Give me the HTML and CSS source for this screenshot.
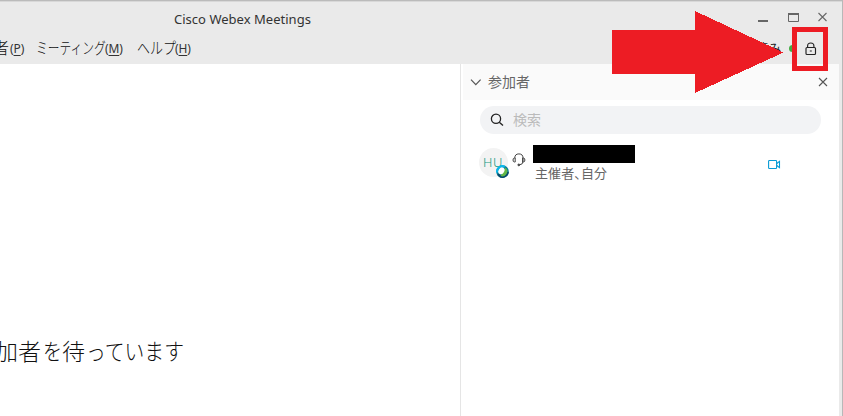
FILE: index.html
```html
<!DOCTYPE html>
<html lang="ja">
<head>
<meta charset="utf-8">
<title>Cisco Webex Meetings</title>
<link rel="stylesheet" href="styles.css">
</head>
<body>
<div class="window">
  <header class="titlebar">
    <h1>Cisco Webex Meetings</h1>
    <svg class="controls" width="74" height="14" viewBox="0 0 74 14" fill="none" stroke="#666">
      <path d="M1 11H11" stroke-width="2"/>
      <path d="M31.5 4V11.5H41.5V4" /><path d="M31 4H42" stroke-width="2"/>
      <path d="M61.5 3L69.5 11M69.5 3L61.5 11" stroke-width="1.1"/>
    </svg>
  </header>
  <nav class="menubar">
    <div class="menu menu-p"><span class="jp">者</span><span class="key">(<u>P</u>)</span></div>
    <div class="menu menu-m"><span class="jp">ミーティング</span><span class="key">(<u>M</u>)</span></div>
    <div class="menu menu-h"><span class="jp">ヘルプ</span><span class="key">(<u>H</u>)</span></div>
    <div class="status"><span>接続済み</span><i class="dot"></i>
      <svg class="lock" width="12" height="14" viewBox="0 0 12 14" fill="none" stroke="#222" stroke-width="1.15"><rect x="1" y="5.5" width="9.5" height="7" rx="1"/><path d="M2.6 5.5V4Q2.6 1 5.75 1T8.9 4V5.5M4.8 9H6.8"/></svg>
    </div>
  </nav>
  <div class="content">
    <main class="stage">
      <p class="waiting"><span class="w-kanji">加者</span><span class="w-wo">を</span><span class="w-wait">待</span><span class="w-kana">っています</span></p>
    </main>
    <aside class="panel">
      <div class="panel-head">
        <svg width="12" height="8" viewBox="0 0 12 8" fill="none" stroke="#555" stroke-width="1.2"><path d="M1 1.7L5.8 6.7L10.6 1.7"/></svg>
        <h2>参加者</h2>
        <svg class="close" width="10" height="10" viewBox="0 0 10 10" fill="none" stroke="#555" stroke-width="1.1"><path d="M1 1L9 9M9 1L1 9"/></svg>
      </div>
      <div class="search">
        <svg width="14" height="14" viewBox="0 0 14 14" fill="none" stroke="#222" stroke-width="1.3"><circle cx="6" cy="5.8" r="4.6"/><path d="M9.3 9.2L13 12.6"/></svg>
        <span>検索</span>
      </div>
      <div class="person">
        <div class="avatar"><span>HU</span>
          <svg class="badge" width="13" height="13" viewBox="0 0 13 13"><circle cx="6.5" cy="6.5" r="6.3" fill="#087d9b"/><path d="M1.3 7.5A5.3 5.3 0 0 1 8.8 1.7" fill="none" stroke="#08b9ed" stroke-width="2.2"/><path d="M2 9.2A5.3 5.3 0 0 0 11.8 7" fill="none" stroke="#06496a" stroke-width="2.2"/><path d="M9.5 2.5A5 5 0 0 1 4.5 11Z" fill="#62b846"/><ellipse cx="5.4" cy="5.8" rx="2.8" ry="3.6" transform="rotate(35 5.4 5.8)" fill="#fff"/></svg>
        </div>
        <svg class="headset" width="14" height="14" viewBox="0 0 14 14" fill="none" stroke="#444" stroke-width="1"><path d="M2.8 5.2V5A4.1 4.1 0 0 1 11 5V8.5Q11 11.5 7.6 11.8"/><path d="M3.2 5H2.5Q1 5 1 7T2.5 9H3.2ZM10.6 5H11.4Q12.9 5 12.9 7T11.4 9H10.6Z"/><circle cx="6.8" cy="11.9" r=".9" fill="#444"/></svg>
        <div class="identity"><div class="redacted"></div><div class="role">主催者、自分</div></div>
        <svg class="camera" width="13" height="11" viewBox="0 0 13 11" fill="none" stroke="#079bd5" stroke-width="1.1"><rect x=".6" y="1.5" width="8" height="8" rx=".8"/><path d="M8.8 4.5L11.5 2.3V8.7L8.8 6.5"/></svg>
      </div>
    </aside>
  </div>
  <svg class="arrow" width="172" height="84" viewBox="0 0 172 84" shape-rendering="crispEdges"><path d="M0 19H83V0L171.5 41.5L83 82V63H0Z" fill="#ed1c24"/></svg>
  <div class="highlight"></div>
</div>
</body>
</html>
```
FILE: styles.css
```css
* { box-sizing: border-box; }
body { margin: 0; overflow: hidden; font-family: "Noto Sans", "Noto Sans CJK JP", sans-serif; color: #333; }
h1, h2, p { margin: 0; font-weight: 400; }
svg { display: block; flex: none; }
.window { position: relative; width: 843px; height: 416px; display: flex; flex-direction: column; background: #eaeaea; border-top: 1px solid #bbb; border-right: 1px solid #b8b8b8; overflow: hidden; white-space: nowrap; }
.window::before { content: ""; flex: none; height: 1px; background: #d8d8d8; }
.titlebar { height: 34px; flex: none; display: flex; align-items: flex-start; padding: 8px 11px 0 174px; }
.titlebar h1 { font-size: 13px; line-height: 19px; letter-spacing: .02px; }
.controls { margin: 0 0 0 auto; }
.menubar { height: 28px; flex: none; display: flex; }
.menu { display: flex; height: 28px; line-height: 24px; flex: none; }
.menu-p { width: 36px; }
.menu-m { width: 101px; }
.menu-h { width: 80px; }
.jp { display: block; font: 300 16px/22px "Noto Sans CJK JP", sans-serif; color: #111; transform-origin: left; }
.menu-p .jp { width: 10px; text-indent: -7px; }
.menu-m .jp { width: 69px; transform: scaleX(.735); }
.menu-h .jp { width: 38px; transform: scaleX(.81); }
.key { font-size: 12px; line-height: 26px; letter-spacing: -.1px; }
.key u { text-underline-offset: 2px; }
.status { display: flex; margin-left: auto; padding-right: 25px; align-items: flex-start; }
.status span { font: 13px/23px "Noto Sans CJK JP", sans-serif; color: #222; }
.dot { width: 7px; height: 7px; margin: 9px 9px 0 8px; border-radius: 50%; background: #43ab43; }
.lock { margin-top: 6px; }
.content { flex: 1; display: flex; min-height: 0; margin-right: 3px; background: #fff; }
.stage { width: 460px; flex: none; overflow: hidden; padding-top: 269px; }
.waiting { display: flex; font: 300 23px/34px "Noto Sans CJK JP", sans-serif; color: #111; }
.waiting span { flex: none; transform-origin: left; }
.w-kanji { width: 43px; text-indent: -5px; }
.w-wo { width: 19px; transform: scaleX(.83); }
.w-wait { width: 24px; }
.w-kana { width: 98px; transform: scaleX(.86); }
.panel { flex: 1; border-left: 1px solid #e5e5e5; padding-left: 2px; }
.panel-head { height: 36px; background: #fafafa; display: flex; align-items: center; padding: 0 11px 0 7px; }
.panel-head h2 { font: 14px/20px "Noto Sans CJK JP", sans-serif; color: #666; margin: -2px 0 0 6px; }
.close { margin-left: auto; }
.search { height: 28px; margin: 6px 18px 0 17px; border-radius: 14px; background: #f2f3f5; display: flex; align-items: center; padding-left: 10px; }
.search span { font: 14px/20px "Noto Sans CJK JP", sans-serif; color: #bbb; margin: -2px 0 0 9px; }
.person { display: flex; height: 50px; padding: 11px 0 0 16px; }
.avatar { position: relative; width: 29px; height: 29px; margin-top: 3px; border-radius: 50%; background: #f3f3f3; }
.avatar span { display: block; padding-left: 4px; font: 300 13px/29px "Noto Sans", sans-serif; letter-spacing: .7px; color: #149a81; }
.badge { position: absolute; left: 17px; top: 17px; }
.headset { margin: 8px 0 0 4px; }
.identity { margin-left: 7px; }
.redacted { width: 102px; height: 18px; background: #000; }
.role { padding-left: 2px; font: 13px/20px "Noto Sans CJK JP", sans-serif; letter-spacing: .1px; font-feature-settings: "palt"; color: #666; }
.camera { margin: 14px 58px 0 auto; }
.arrow { position: absolute; left: 612px; top: 10px; }
.highlight { position: absolute; left: 792px; top: 26px; width: 36px; height: 44px; border: 5px solid #ed1c24; }
```
